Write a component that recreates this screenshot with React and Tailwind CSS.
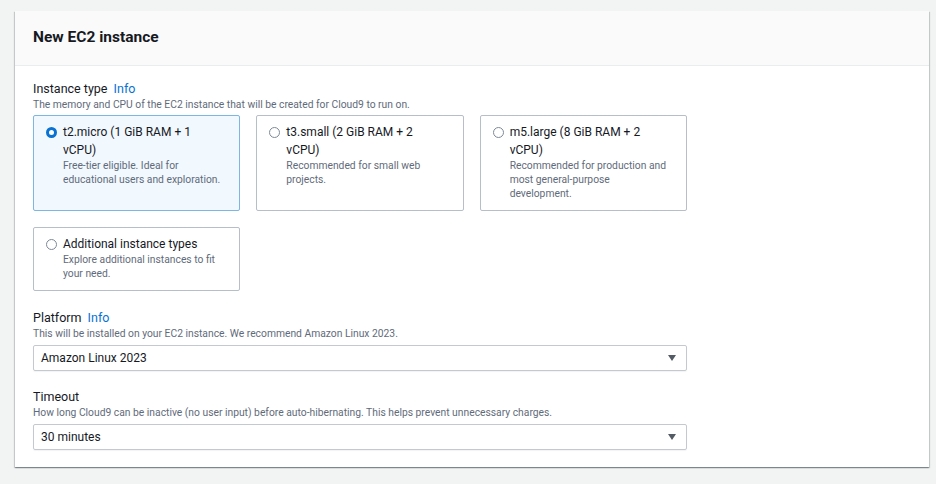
import React from 'react'

const font = { fontFamily: 'Roboto, "Open Sans", sans-serif' }

function Radio({ checked }) {
  if (checked) {
    return <span className="mt-[4px] h-[11px] w-[11px] shrink-0 rounded-full border-[3px] border-[#0972d3] bg-white"></span>
  }
  return <span className="mt-[4px] h-[11px] w-[11px] shrink-0 rounded-full border border-[#7d8998] bg-white"></span>
}

function Tile({ checked, title, desc }) {
  return (
    <div
      className={
        checked
          ? 'flex gap-[6px] rounded-[2px] border border-[#7db6e3] bg-[#f1f8fe] pl-[12px] pr-[16px] pt-[7px] pb-[9px]'
          : 'flex gap-[6px] rounded-[2px] border border-[#b6bec9] bg-white pl-[12px] pr-[16px] pt-[7px] pb-[9px]'
      }
    >
      <Radio checked={checked} />
      <div>
        <div className="text-[12px] leading-[18px] text-[#16191f]">{title}</div>
        <div className="text-[10.3px] leading-[14px] text-[#5f6b7a]">{desc}</div>
      </div>
    </div>
  )
}

function Select({ value }) {
  return (
    <div className="mt-[4px] flex h-[26px] w-[654px] items-center justify-between rounded-[2px] border border-[#c4c9cf] pl-[7px] pr-[10px] shadow-[0_1px_1px_rgba(0,0,0,0.05)]">
      <span className="text-[12px] text-[#16191f]">{value}</span>
      <svg width="8" height="6" viewBox="0 0 8 6">
        <path d="M0 0 L8 0 L4 6 Z" fill="#545b64" />
      </svg>
    </div>
  )
}

export default function App() {
  return (
    <div className="min-h-[484px] bg-[#f2f3f3] pl-[15px] pt-[11px]" style={font}>
      <div className="w-[914px] bg-white shadow-[0_1px_1px_0_rgba(0,28,36,0.3),1px_1px_1px_0_rgba(0,28,36,0.15),-1px_1px_1px_0_rgba(0,28,36,0.15)]">
        <div className="flex h-[55px] items-center border-b border-[#eaeded] bg-[#fafafa] px-[18px]">
          <h2 className="text-[15.5px] font-bold text-[#16191f]">New EC2 instance</h2>
        </div>

        <div className="px-[18px] pt-[14px] pb-[17px]">
          <div className="text-[12.5px] leading-[18px] text-[#16191f]">
            Instance type <span className="ml-[3px] text-[#0972d3]">Info</span>
          </div>
          <div className="text-[10.3px] leading-[14px] text-[#5f6b7a]">
            The memory and CPU of the EC2 instance that will be created for Cloud9 to run on.
          </div>

          <div className="mt-[3px] grid w-[654px] grid-cols-3 gap-x-[16px] gap-y-[16px]">
            <Tile checked title="t2.micro (1 GiB RAM + 1 vCPU)" desc="Free-tier eligible. Ideal for educational users and exploration." />
            <Tile title="t3.small (2 GiB RAM + 2 vCPU)" desc="Recommended for small web projects." />
            <Tile title="m5.large (8 GiB RAM + 2 vCPU)" desc="Recommended for production and most general-purpose development." />
            <Tile title="Additional instance types" desc="Explore additional instances to fit your need." />
          </div>

          <div className="mt-[18px] text-[12.5px] leading-[18px] text-[#16191f]">
            Platform <span className="ml-[3px] text-[#0972d3]">Info</span>
          </div>
          <div className="text-[10.3px] leading-[14px] text-[#5f6b7a]">
            This will be installed on your EC2 instance. We recommend Amazon Linux 2023.
          </div>
          <Select value="Amazon Linux 2023" />

          <div className="mt-[17px] text-[12.5px] leading-[18px] text-[#16191f]">Timeout</div>
          <div className="text-[10.3px] leading-[14px] text-[#5f6b7a]">
            How long Cloud9 can be inactive (no user input) before auto-hibernating. This helps prevent unnecessary charges.
          </div>
          <Select value="30 minutes" />
        </div>
      </div>
    </div>
  )
}
